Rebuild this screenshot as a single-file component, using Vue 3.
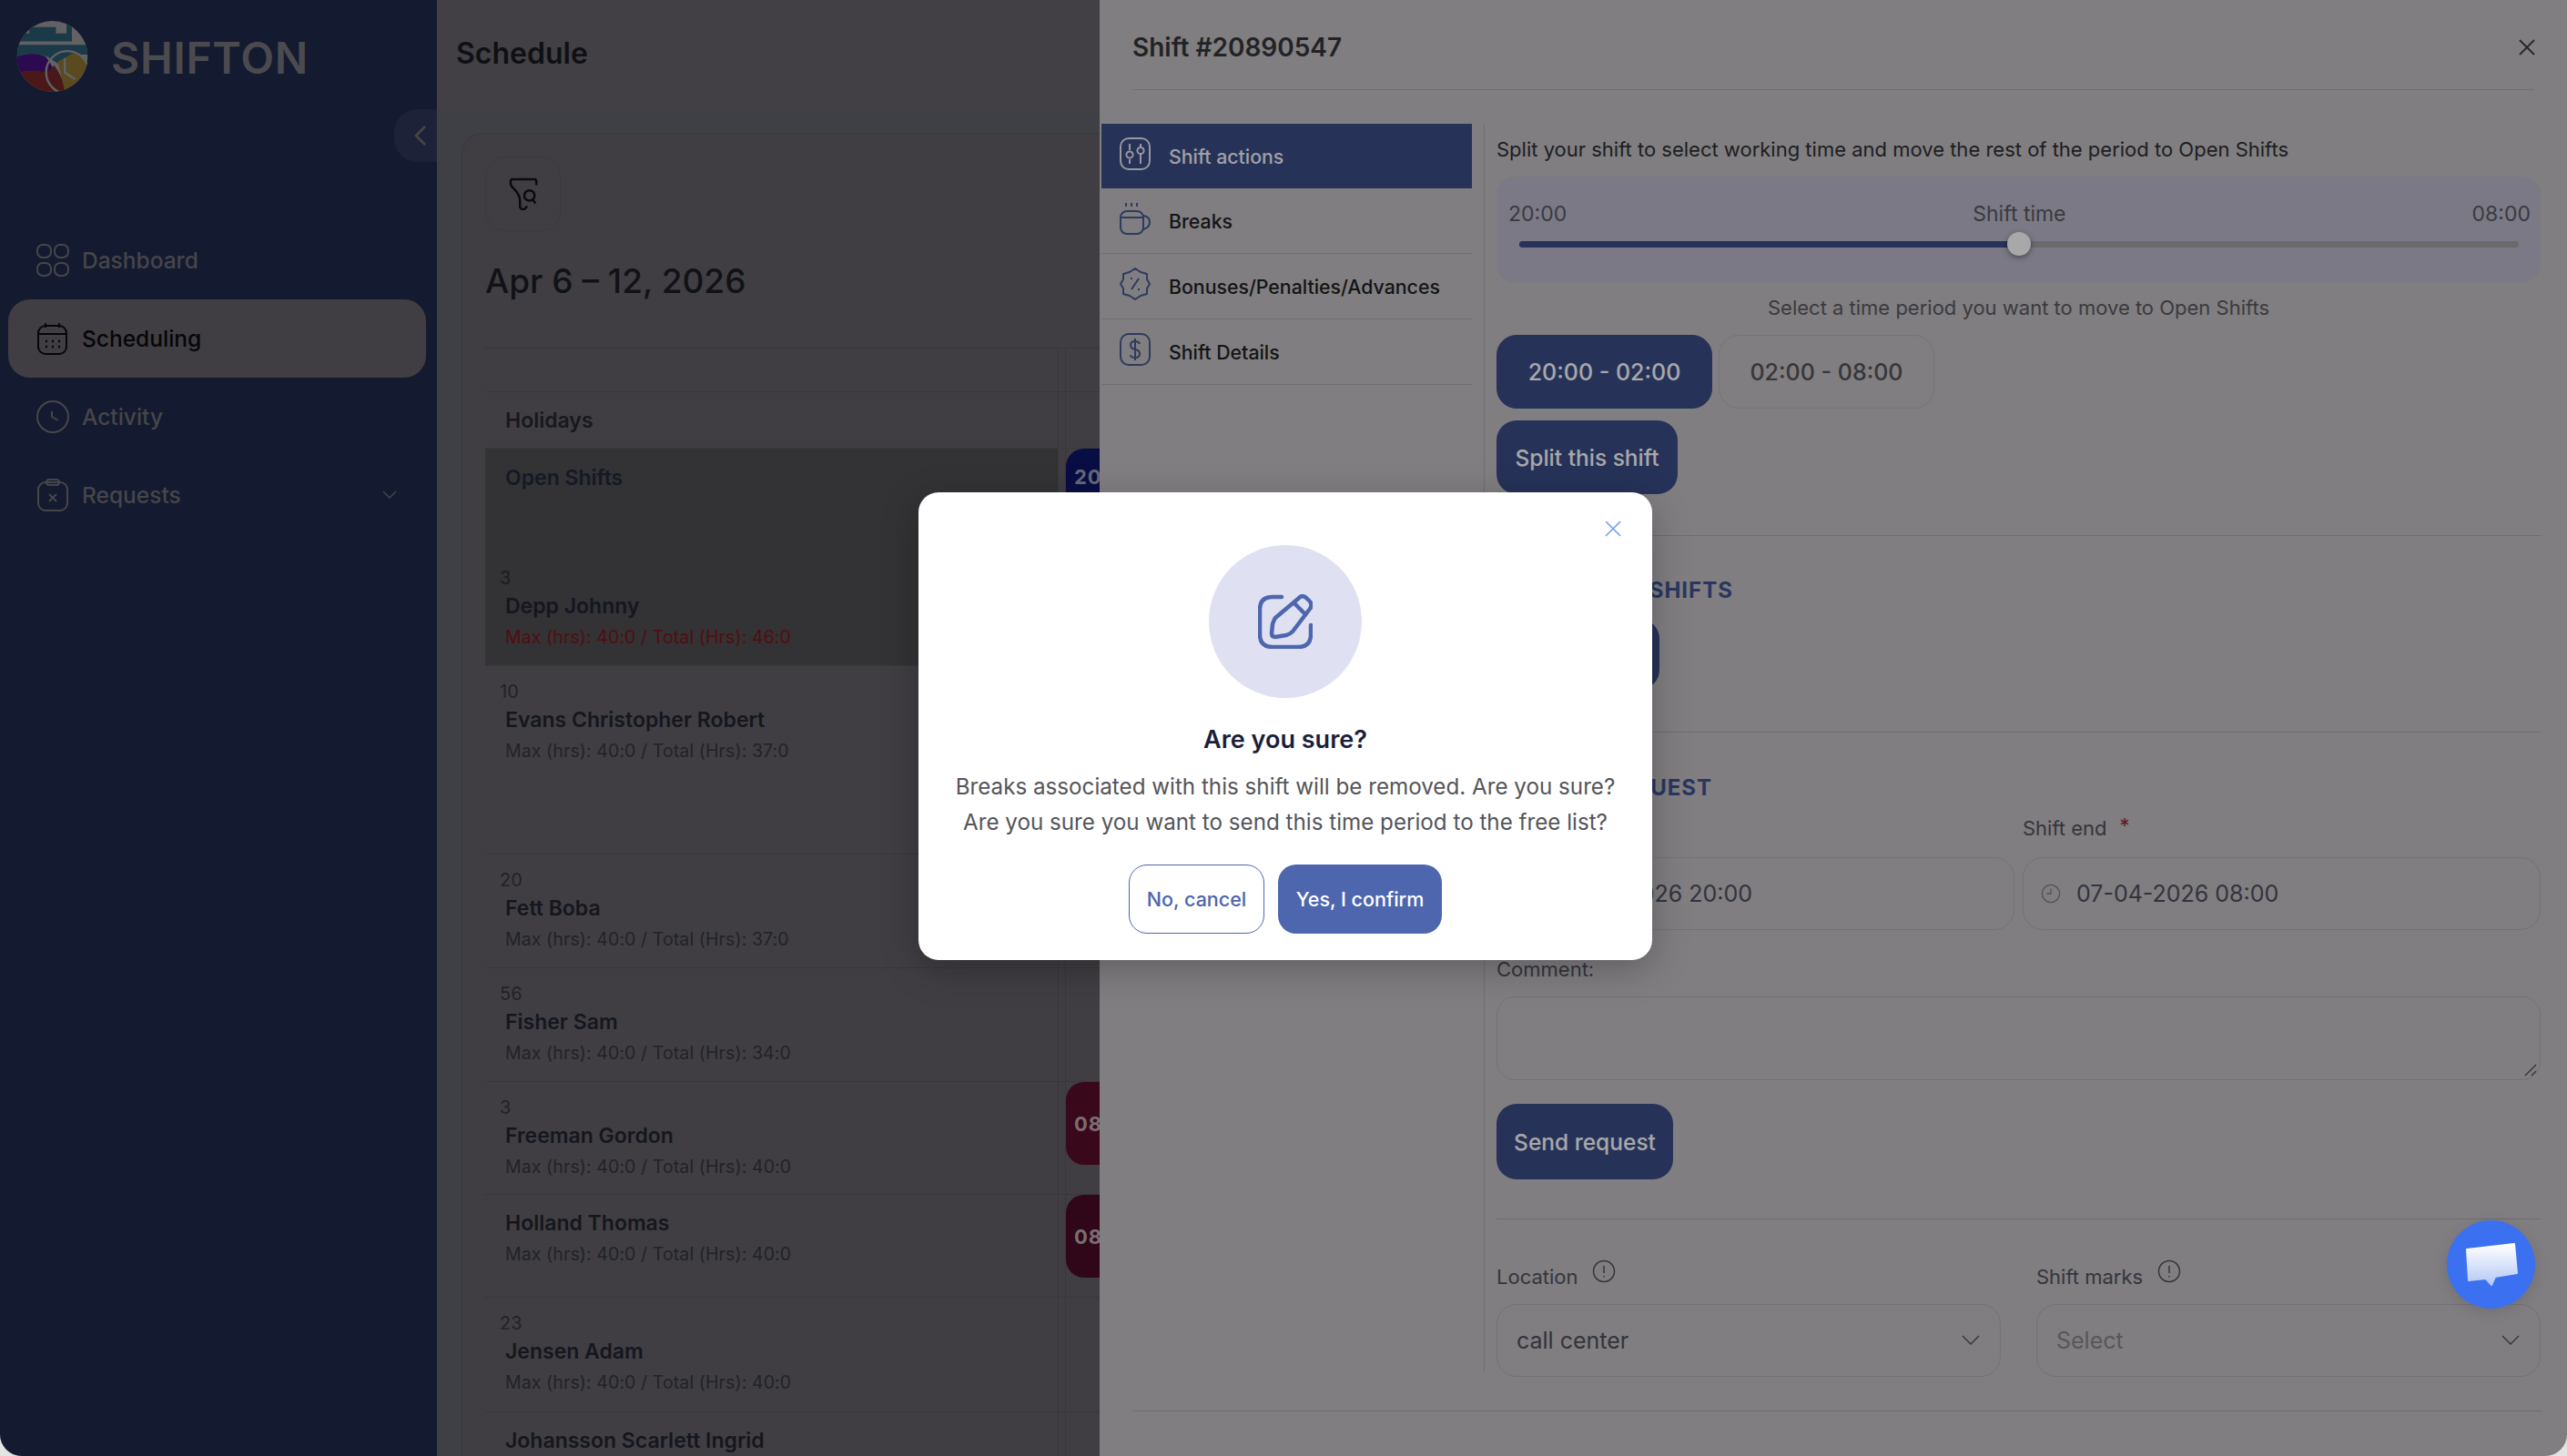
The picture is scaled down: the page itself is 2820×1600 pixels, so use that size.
<script setup>
const nav = [
  { label: 'Dashboard', icon: 'grid' },
  { label: 'Scheduling', icon: 'calendar', active: true },
  { label: 'Activity', icon: 'clock' },
  { label: 'Requests', icon: 'clipboard', more: true },
]

const rows = [
  { num: '3', name: 'Depp Johnny', total: '46:0', h: 125, over: true },
  { num: '10', name: 'Evans Christopher Robert', total: '37:0', h: 207 },
  { num: '20', name: 'Fett Boba', total: '37:0', h: 125 },
  { num: '56', name: 'Fisher Sam', total: '34:0', h: 125 },
  { num: '3', name: 'Freeman Gordon', total: '40:0', h: 124, chip: 'red' },
  { num: '', name: 'Holland Thomas', total: '40:0', h: 113, chip: 'wine' },
  { num: '23', name: 'Jensen Adam', total: '40:0', h: 126 },
  { num: '', name: 'Johansson Scarlett Ingrid', total: '40:0', h: 125 },
]

const tabs = ['Shift actions', 'Breaks', 'Bonuses/Penalties/Advances', 'Shift Details']
</script>

<template>
  <div class="app">
    <aside class="sidebar">
      <div class="brand">
        <svg class="logo" viewBox="0 0 80 80">
          <defs>
            <clipPath id="logoClip"><circle cx="40" cy="40" r="40" /></clipPath>
          </defs>
          <g clip-path="url(#logoClip)">
            <rect width="80" height="80" fill="#959295" />
            <path d="M0 23 V14 H14 V7 H44 V14 H56 V0 H62 V23 Z" fill="#27576c" />
            <path d="M0 27 H80 V38 H62 L46 48 L34 40 Q14 34 0 40 Z" fill="#27576c" />
            <path d="M0 40 Q18 34 32 40 Q36 44 40 52 L34 60 Q16 54 0 60 Z" fill="#410f78" />
            <path d="M0 58 Q18 54 34 58 L42 50 Q50 60 56 80 H0 Z" fill="#6f2424" />
            <path d="M46 46 L64 36 Q76 40 80 46 V70 L60 80 H54 Q50 60 46 46 Z" fill="#876f30" />
            <circle cx="57" cy="58" r="24" fill="none" stroke="#959295" stroke-width="2.5" />
            <path d="M54 42 V58 L66 66" fill="none" stroke="#959295" stroke-width="2.5" />
          </g>
        </svg>
        <span class="wordmark">SHIFTON</span>
      </div>
      <nav class="nav">
        <div v-for="item in nav" :key="item.label" class="nav-item" :class="{ active: item.active }">
          <svg class="nav-icon" viewBox="0 0 36 36" fill="none" stroke="currentColor" stroke-width="2">
            <template v-if="item.icon === 'grid'">
              <rect x="1" y="1" width="15" height="14" rx="6" />
              <rect x="20" y="1" width="15" height="14" rx="6" />
              <rect x="1" y="21" width="15" height="14" rx="6" />
              <rect x="20" y="21" width="15" height="14" rx="6" />
            </template>
            <template v-else-if="item.icon === 'calendar'">
              <rect x="2" y="4" width="31" height="31" rx="8" />
              <path d="M2 13 H33 M10 1 V6 M25 1 V6" />
              <path d="M10 21 h2 M17 21 h2 M24 21 h2 M10 27 h2 M17 27 h2 M24 27 h2" stroke-width="2.4" />
            </template>
            <template v-else-if="item.icon === 'clock'">
              <circle cx="18" cy="18" r="17" />
              <path d="M17 12 V18 L24 22" />
            </template>
            <template v-else>
              <rect x="2" y="4" width="32" height="31" rx="8" />
              <rect x="11" y="1" width="14" height="6" rx="3" />
              <path d="M14 17 L22 25 M22 17 L14 25" />
            </template>
          </svg>
          <span class="nav-label">{{ item.label }}</span>
          <svg v-if="item.more" class="nav-more" viewBox="0 0 16 10" fill="none" stroke="currentColor" stroke-width="1.3">
            <path d="M1 1 L8 8 L15 1" />
          </svg>
        </div>
      </nav>
      <div class="collapse">
        <svg viewBox="0 0 16 24" fill="none" stroke="currentColor" stroke-width="2.6"><path d="M13 2 L3 12 L13 22" /></svg>
      </div>
    </aside>

    <main class="main">
      <header class="main-head">Schedule</header>
      <section class="card">
        <button class="filter">
          <svg viewBox="0 0 32 38" fill="none" stroke="#0f1016" stroke-width="2.6">
            <path d="M3 2 H29 Q31 2 31 5 V9 M3 2 Q1 2 1 6 Q1 10 5 13 Q12 20 12 27 V33 Q12 37 16 37 Q19 37 20 33" />
            <circle cx="23" cy="21" r="6" />
            <path d="M27 26 L30 30" />
          </svg>
        </button>
        <h2 class="date">Apr 6 – 12, 2026</h2>
        <div class="table">
          <div class="t-row t-top"><div class="t-name"></div><div class="t-day"></div></div>
          <div class="t-row t-holiday">
            <div class="t-name"><span class="t-title">Holidays</span></div><div class="t-day"></div>
          </div>
          <div class="t-row t-open">
            <div class="t-name"><span class="t-title">Open Shifts</span></div>
            <div class="t-day"><div class="chip chip-blue">20:00</div></div>
          </div>
          <div
            v-for="row in rows"
            :key="row.name"
            class="t-row"
            :class="{ 't-over': row.over }"
            :style="{ height: row.h + 'px' }"
          >
            <div class="t-name">
              <div v-if="row.num" class="t-num">{{ row.num }}</div>
              <div class="t-person">{{ row.name }}</div>
              <div class="t-hours">Max (hrs): 40:0 / Total (Hrs): {{ row.total }}</div>
            </div>
            <div class="t-day">
              <div v-if="row.chip" class="chip" :class="'chip-' + row.chip">08:00</div>
            </div>
          </div>
        </div>
      </section>
    </main>

    <section class="drawer">
      <header class="drawer-head">
        <h1>Shift #20890547</h1>
        <svg class="drawer-close" viewBox="0 0 18 18" fill="none" stroke="#3a3a3e" stroke-width="1.8"><path d="M1 1 L17 17 M17 1 L1 17" /></svg>
      </header>
      <div class="drawer-body">
        <ul class="tabs">
          <li v-for="(tab, i) in tabs" :key="tab" class="tab" :class="{ active: i === 0 }">
            <svg class="tab-icon" viewBox="0 0 34 36" fill="none" stroke="currentColor" stroke-width="2">
              <template v-if="i === 0">
                <rect x="1" y="1" width="32" height="34" rx="9" />
                <path d="M11 7 V14 M11 24 V29 M23 7 V10 M23 19 V29" />
                <circle cx="11" cy="19" r="3.6" />
                <circle cx="23" cy="14.500" r="3.600" />
              </template>
              <template v-else-if="i === 1">
                <path d="M7 1 V5 M13 1 V5 M19 1 V5" />
                <rect x="1" y="10" width="25" height="25" rx="7" />
                <path d="M1 17 H26 M26 15 Q33 16 33 22 Q33 28 26 30" />
              </template>
              <template v-else-if="i === 2">
                <path d="M17 1 L23 5 L30 7 L30 13 L33 18 L30 23 L30 29 L23 31 L17 35 L11 31 L4 29 L4 23 L1 18 L4 13 L4 7 L11 5 Z" stroke-linejoin="round" />
                <path d="M21 12 L13 24 M12 12 h2 M20 24 h2" />
              </template>
              <template v-else>
                <rect x="1" y="1" width="32" height="34" rx="9" />
                <path d="M22 12 Q21 9 17 9 Q12 9 12 13 Q12 17 17 18 Q22 19 22 23 Q22 27 17 27 Q12 27 12 24 M17 6 V30" />
              </template>
            </svg>
            <span>{{ tab }}</span>
          </li>
        </ul>
        <div class="panel">
          <p class="intro">Split your shift to select working time and move the rest of the period to Open Shifts</p>
          <div class="slider">
            <div class="slider-labels"><span>20:00</span><span>Shift time</span><span>08:00</span></div>
            <div class="track">
              <div class="track-fill"></div>
              <div class="track-thumb"></div>
            </div>
          </div>
          <p class="hint">Select a time period you want to move to Open Shifts</p>
          <div class="periods">
            <button class="period selected">20:00 - 02:00</button>
            <button class="period">02:00 - 08:00</button>
          </div>
          <button class="btn split">Split this shift</button>
          <hr class="rule rule-a" />
          <h3 class="section section-a">MOVE OPEN SHIFTS</h3>
          <button class="btn assign">Assign</button>
          <hr class="rule rule-b" />
          <h3 class="section section-b">CHANGE REQUEST</h3>
          <div class="two two-tight">
            <label class="field-label">Shift start <em>*</em></label>
            <label class="field-label">Shift end <em>*</em></label>
            <div class="input">
              <svg class="input-clock" viewBox="0 0 24 24" fill="none" stroke="currentColor" stroke-width="1.4"><circle cx="12" cy="12" r="10.500" /><path d="M12 6 V12 H7" /></svg>
              07-04-2026 20:00
            </div>
            <div class="input">
              <svg class="input-clock" viewBox="0 0 24 24" fill="none" stroke="currentColor" stroke-width="1.4"><circle cx="12" cy="12" r="10.500" /><path d="M12 6 V12 H7" /></svg>
              07-04-2026 08:00
            </div>
          </div>
          <label class="comment-label">Comment:</label>
          <div class="textarea">
            <svg class="grip" viewBox="0 0 14 14" stroke="#4d4d5c" stroke-width="1.4"><path d="M13 1 L1 13 M13 8 L8 13" /></svg>
          </div>
          <button class="btn send">Send request</button>
          <hr class="rule rule-c" />
          <div class="two two-wide">
            <label class="field-label info">
              Location
              <svg viewBox="0 0 26 26" fill="none" stroke="currentColor" stroke-width="1.5"><circle cx="13" cy="13" r="11.500" /><path d="M13 7 V15 M13 18 V19.500" /></svg>
            </label>
            <label class="field-label info">
              Shift marks
              <svg viewBox="0 0 26 26" fill="none" stroke="currentColor" stroke-width="1.5"><circle cx="13" cy="13" r="11.500" /><path d="M13 7 V15 M13 18 V19.500" /></svg>
            </label>
            <div class="select">
              <span>call center</span>
              <svg viewBox="0 0 20 12" fill="none" stroke="currentColor" stroke-width="1.400"><path d="M1 1 L10 10 L19 1" /></svg>
            </div>
            <div class="select placeholder">
              <span>Select</span>
              <svg viewBox="0 0 20 12" fill="none" stroke="currentColor" stroke-width="1.400"><path d="M1 1 L10 10 L19 1" /></svg>
            </div>
          </div>
        </div>
      </div>
      <hr class="rule drawer-foot" />
    </section>

    <div class="backdrop">
      <div class="modal">
        <svg class="modal-close" viewBox="0 0 18 18" fill="none" stroke="#7a9ef0" stroke-width="1.6"><path d="M1 1 L17 17 M17 1 L1 17" /></svg>
        <div class="modal-badge">
          <svg viewBox="0 0 60 60" fill="none" stroke="#4d66ae" stroke-width="4.500" stroke-linecap="round" stroke-linejoin="round">
            <path d="M26 3 H16 Q2 3 2 17 V44 Q2 58 16 58 H44 Q58 58 58 44 V34" />
            <path d="M44 5 Q48 0 53 4 L57 8 Q60 12 57 16 L38 41 Q35 44 31 45 L19 47 Q15 47 15 43 L16 33 Q17 29 19 26 Z" />
            <path d="M40 10 L52 22" />
          </svg>
        </div>
        <h2 class="modal-title">Are you sure?</h2>
        <p class="modal-text">
          Breaks associated with this shift will be removed. Are you sure?<br />
          Are you sure you want to send this time period to the free list?
        </p>
        <div class="modal-actions">
          <button class="modal-btn ghost">No, cancel</button>
          <button class="modal-btn solid">Yes, I confirm</button>
        </div>
      </div>
    </div>

    <div class="chat">
      <svg viewBox="0 0 58 47">
        <defs>
          <linearGradient id="chatFill" x1="0" y1="0" x2="0" y2="1">
            <stop offset="0" stop-color="#ffffff" />
            <stop offset="1" stop-color="#b4c8f4" />
          </linearGradient>
        </defs>
        <path d="M2 7 L54 1 L57 33 L33 37 L29 46 L23 39 L4 41 Z" fill="url(#chatFill)" stroke="url(#chatFill)" stroke-width="2" stroke-linejoin="round" />
      </svg>
    </div>
  </div>
</template>

<style>
html,
body {
  margin: 0;
  background: #e4e4e4;
  overflow: hidden;
}
</style>

<style scoped>
* {
  box-sizing: border-box;
}

.app {
  position: relative;
  display: flex;
  width: 2820px;
  height: 1600px;
  overflow: hidden;
  border-radius: 0 0 24px 24px;
  font-family: Inter, "Noto Sans", "Liberation Sans", sans-serif;
}

/* sidebar */
.sidebar {
  position: relative;
  flex: 0 0 480px;
  background: #1e2748;
}

.brand {
  display: flex;
  align-items: center;
  gap: 25px;
  height: 78px;
  margin: 23px 0 0 18px;
}

.logo {
  width: 79px;
  height: 78px;
}

.wordmark {
  margin-top: 2px;
  font-size: 48px;
  font-weight: 600;
  letter-spacing: 0.7px;
  color: #716f75;
}

.nav {
  margin: 142px 12px 0 9px;
  display: flex;
  flex-direction: column;
}

.nav-item {
  display: flex;
  align-items: center;
  height: 86px;
  padding-left: 31px;
  border-radius: 24px;
  color: #6a696f;
}

.nav-item.active {
  background: #605d63;
  color: #09090c;
}

.nav-icon {
  width: 36px;
  height: 36px;
}

.nav-label {
  margin-left: 14px;
  font-size: 24.500px;
  font-weight: 500;
}

.nav-more {
  width: 16px;
  height: 10px;
  margin-left: auto;
  margin-right: 32px;
}

.collapse {
  position: absolute;
  top: 120px;
  right: 0;
  width: 47px;
  height: 58px;
  display: flex;
  align-items: center;
  justify-content: flex-end;
  padding-right: 10px;
  background: #2d3354;
  border-radius: 26px 0 0 26px;
  color: #6a696f;
}

.collapse svg {
  width: 16px;
  height: 24px;
}

/* schedule */
.main {
  flex: 0 0 728px;
  height: 1600px;
  overflow: hidden;
  background: #5f6068;
}

.main-head {
  height: 120px;
  padding: 35px 0 0 21px;
  background: #636066;
  font-size: 32px;
  line-height: 48px;
  font-weight: 600;
  color: #17181e;
}

.card {
  width: 1000px;
  margin: 26px 0 0 27px;
  padding: 25px 0 0 26px;
  background: #605e64;
  border: 1px solid #55535a;
  border-right: 0;
  border-radius: 24px 0 0 0;
}

.filter {
  display: flex;
  align-items: center;
  justify-content: center;
  width: 83px;
  height: 82px;
  margin: 0 0 0 -1px;
  padding: 0;
  background: transparent;
  border: 1px solid #58565c;
  border-radius: 22px;
}

.filter svg {
  width: 32px;
  height: 36px;
}

.date {
  margin: 25px 0 43px -1px;
  font-size: 37px;
  line-height: 60px;
  font-weight: 500;
  color: #1a1b24;
}

.table {
  margin-left: -1px;
  border-top: 1px solid #55535a;
}

.t-row {
  display: flex;
  border-bottom: 1px solid #55535a;
}

.t-top {
  height: 48px;
}

.t-holiday {
  height: 62px;
}

.t-holiday .t-name {
  display: flex;
  align-items: center;
  padding-top: 0;
}

.t-open {
  height: 114px;
  border-bottom: 0;
}

.t-open .t-name {
  padding-top: 14px;
  background: #4d4b50;
}

.t-over .t-name {
  background: #4d4b50;
}

.t-name {
  flex: 0 0 630px;
  padding: 14px 0 0 22px;
  border-right: 1px solid #55535a;
}

.t-day {
  position: relative;
  flex: 0 0 300px;
  margin-left: 7px;
  border-left: 1px solid #55535a;
}

.t-title {
  font-size: 23px;
  line-height: 36px;
  font-weight: 600;
  color: #24252e;
}

.t-open .t-title {
  color: #20263a;
}

.t-num {
  margin-left: -6px;
  font-size: 20px;
  line-height: 28px;
  color: #33333d;
}

.t-over .t-num {
  color: #2a2a33;
}

.t-person {
  font-size: 23px;
  line-height: 34px;
  font-weight: 600;
  white-space: nowrap;
  color: #20222e;
}

.t-hours {
  font-size: 19.500px;
  line-height: 34px;
  letter-spacing: 0.1px;
  white-space: nowrap;
  color: #33333d;
}

.t-over .t-hours {
  color: #7c1418;
}

.t-over .t-person {
  color: #1e2130;
}

.chip {
  width: 240px;
  height: 91px;
  padding: 0 0 0 9px;
  border-radius: 20px;
  display: flex;
  align-items: center;
  font-size: 22px;
  font-weight: 700;
  letter-spacing: 1px;
  white-space: nowrap;
}

.chip-blue {
  height: 114px;
  padding-bottom: 52px;
  background: #0c1566;
  color: #9a9cb0;
}

.chip-red {
  background: #560c28;
  color: #b8a4ac;
}

.chip-wine {
  background: #470b25;
  color: #b8a4ac;
}

/* shift drawer */
.drawer {
  position: relative;
  flex: 0 0 1612px;
  height: 1600px;
  background: #c0bdc0;
  padding-left: 2px;
}

.drawer-head {
  display: flex;
  align-items: center;
  justify-content: space-between;
  height: 99px;
  margin: 0 36px 0 34px;
  padding-top: 6px;
  border-bottom: 1px solid #a7a4ab;
}

.drawer-head h1 {
  margin: 0;
  font-size: 28px;
  font-weight: 600;
  color: #343539;
}

.drawer-close {
  width: 18px;
  height: 18px;
  margin-right: -1px;
}

.drawer-body {
  display: flex;
  height: 1372px;
  margin-top: 37px;
}

.tabs {
  flex: 0 0 407px;
  min-width: 0;
  margin: 0 13px 0 0;
  padding: 0;
  list-style: none;
}

.tab {
  display: flex;
  align-items: center;
  gap: 20px;
  height: 72px;
  padding: 0 0 6px 20px;
  border-bottom: 1px solid #a7a4ab;
  font-size: 21.300px;
  font-weight: 500;
  color: #1e1e21;
}

.tab span {
  margin-top: 6px;
  white-space: nowrap;
}

.tab-icon {
  flex: none;
  width: 34px;
  height: 36px;
  color: #46578f;
}

.tab.active {
  height: 71px;
  background: #394b84;
  border-bottom: 0;
  color: #f0f0f8;
}

.tab.active .tab-icon {
  color: #e4e4ec;
}

.panel {
  flex: 1;
  width: 1161px;
  padding: 0 29px 0 13px;
  border-left: 1px solid #a7a4ab;
}

.intro,
.hint {
  margin: 0;
  height: 58px;
  font-size: 22px;
  line-height: 56px;
  color: #2e2e33;
}

.hint {
  text-align: center;
  color: #59575f;
}

.slider {
  height: 116px;
  padding: 22px 11px 0 13px;
  background: #b7b6c8;
  border-radius: 20px;
}

.slider-labels {
  display: flex;
  justify-content: space-between;
  font-size: 23px;
  line-height: 38px;
  color: #59575f;
}

.track {
  position: relative;
  height: 7px;
  margin: 11px 13px 0 12px;
  background: #9f9ea2;
  border-radius: 4px;
}

.track-fill {
  width: 50%;
  height: 100%;
  background: #394b84;
  border-radius: 4px;
}

.track-thumb {
  position: absolute;
  top: -10px;
  left: calc(50% - 13px);
  width: 26px;
  height: 26px;
  background: #fdfcff;
  border-radius: 50%;
  box-shadow: 0 2px 6px rgba(0, 0, 0, 0.4);
}

.periods {
  display: flex;
  gap: 7px;
}

.period {
  width: 237px;
  height: 81px;
  padding: 0;
  background: transparent;
  border: 1px solid #b1aeb4;
  border-radius: 22px;
  font-family: inherit;
  font-size: 25px;
  font-weight: 500;
  color: #525157;
}

.period.selected {
  background: #394b84;
  border-color: #394b84;
  color: #fdfdff;
}

.btn {
  display: block;
  padding: 0;
  background: #394b84;
  border: 0;
  border-radius: 22px;
  font-family: inherit;
  font-size: 24.500px;
  font-weight: 500;
  color: #fdfdff;
}

.split {
  width: 199px;
  height: 81px;
  margin-top: 13px;
}

.assign {
  width: 179px;
  height: 78px;
  margin-top: 2px;
}

.send {
  width: 194px;
  height: 83px;
  margin-top: 26px;
}

.rule {
  height: 0;
  margin: 0;
  border: 0;
  border-top: 1px solid #a7a4ab;
}

.rule-a {
  margin-top: 45px;
}

.rule-b {
  margin-top: 46px;
}

.rule-c {
  margin-top: 43px;
}

.section {
  margin: 0;
  font-size: 24px;
  font-weight: 700;
  color: #3f5190;
}

.section-a {
  margin-top: 31px;
  padding-left: 7px;
  line-height: 58px;
  letter-spacing: 1px;
}

.section-b {
  margin-top: 37px;
  line-height: 48px;
  letter-spacing: 1px;
}

.two {
  display: grid;
  grid-template-columns: 1fr 1fr;
}

.two-tight {
  column-gap: 9px;
  row-gap: 12px;
}

.two-wide {
  column-gap: 39px;
  row-gap: 10px;
  margin-top: 43px;
}

.field-label {
  display: flex;
  align-items: center;
  height: 40px;
  font-size: 22px;
  color: #51505c;
}

.field-label em {
  margin-left: 14px;
  margin-top: -6px;
  font-style: normal;
  color: #9a1c3a;
}

.field-label.info svg {
  width: 26px;
  height: 26px;
  margin: -12px 0 0 16px;
}

.input,
.select {
  display: flex;
  align-items: center;
  height: 80px;
  border: 1px solid #aeabb7;
  border-radius: 22px;
  font-size: 25px;
  color: #4d4d5c;
}

.input {
  padding-left: 19px;
}

.input-clock {
  width: 22px;
  height: 22px;
  margin-right: 17px;
  color: #7b7a85;
}

.select {
  justify-content: space-between;
  padding: 0 22px 0 21px;
}

.select svg {
  width: 20px;
  height: 12px;
}

.select.placeholder {
  color: #848389;
}

.select.placeholder svg {
  color: #4d4d5c;
}

.comment-label {
  display: block;
  height: 30px;
  margin-top: 28px;
  font-size: 22px;
  line-height: 30px;
  color: #51505c;
}

.textarea {
  position: relative;
  height: 92px;
  margin-top: 15px;
  border: 1px solid #aeabb7;
  border-radius: 20px;
}

.grip {
  position: absolute;
  right: 3px;
  bottom: 3px;
  width: 14px;
  height: 14px;
}

.drawer-foot {
  margin: 42px 28px 0 34px;
}

/* confirm dialog */
.backdrop {
  position: absolute;
  inset: 0;
  display: flex;
  align-items: center;
  justify-content: center;
  background: rgba(0, 0, 0, 0.335);
}

.modal {
  position: relative;
  width: 806px;
  height: 514px;
  padding-top: 58px;
  margin-left: 4px;
  margin-top: -4px;
  background: #ffffff;
  border-radius: 22px;
  text-align: center;
  box-shadow: 0 10px 40px rgba(0, 0, 0, 0.25);
}

.modal-close {
  position: absolute;
  top: 31px;
  right: 34px;
  width: 18px;
  height: 18px;
}

.modal-badge {
  display: flex;
  align-items: center;
  justify-content: center;
  width: 168px;
  height: 168px;
  margin: 0 auto;
  background: #dfe1f2;
  border-radius: 50%;
}

.modal-badge svg {
  width: 60px;
  height: 60px;
}

.modal-title {
  margin: 24px 0 11px;
  font-size: 27px;
  line-height: 44px;
  font-weight: 600;
  color: #1a1f3c;
}

.modal-text {
  margin: 0;
  font-size: 24.200px;
  line-height: 38.500px;
  color: #55555a;
}

.modal-actions {
  display: flex;
  justify-content: center;
  gap: 15px;
  margin-top: 27px;
}

.modal-btn {
  height: 76px;
  padding: 0;
  border-radius: 20px;
  font-family: inherit;
  font-size: 21.500px;
  font-weight: 500;
}

.modal-btn.ghost {
  width: 149px;
  background: #ffffff;
  border: 1px solid #4d66ae;
  color: #4d66ae;
}

.modal-btn.solid {
  width: 180px;
  background: #4d66ae;
  border: 0;
  color: #ffffff;
}

/* chat launcher */
.chat {
  position: absolute;
  top: 1341px;
  left: 2688px;
  width: 97px;
  height: 97px;
  display: flex;
  align-items: center;
  justify-content: center;
  background: #3b71f0;
  border-radius: 50%;
  box-shadow: 0 4px 16px rgba(0, 0, 0, 0.12);
}

.chat svg {
  width: 58px;
  height: 47px;
}
</style>
